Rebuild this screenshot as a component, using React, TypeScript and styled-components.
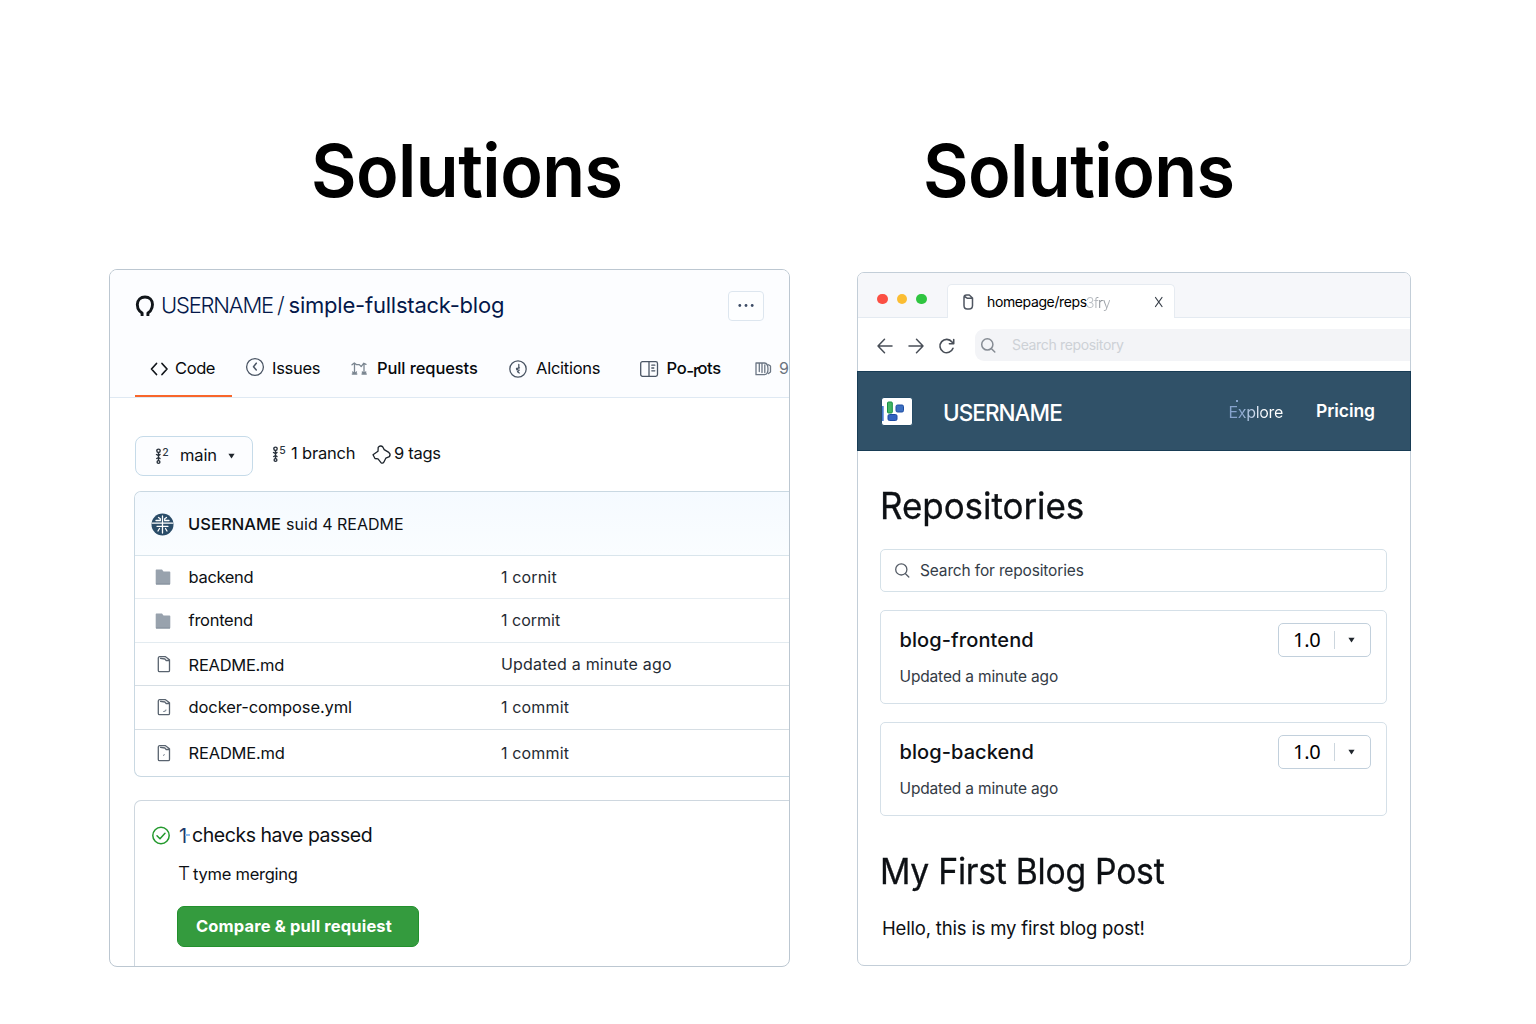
import React from "react";
import styled, { createGlobalStyle } from "styled-components";

const GlobalStyle = createGlobalStyle`
  *, *::before, *::after { box-sizing: border-box; }
  body {
    margin: 0;
    background: #fff;
    color: #0d1014;
    font-family: Inter, "Liberation Sans", sans-serif;
  }
  svg { display: block; flex: none; overflow: visible; }
`;

/* ---------- page ---------- */

const Page = styled.main`
  width: 1536px;
  height: 1024px;
  padding-left: 109px;
  display: flex;
  gap: 67px;
  overflow: hidden;
`;

const Column = styled.section<{ $width: number }>`
  width: ${(p) => p.$width}px;
  flex: none;
  display: flex;
  flex-direction: column;
`;

const ColumnTitle = styled.h1<{ $indent: number; $height: number }>`
  margin: 0 0 0 ${(p) => p.$indent}px;
  height: ${(p) => p.$height}px;
  padding-top: 121px;
  font-size: 73px;
  font-weight: 600;
  line-height: 100px;
  letter-spacing: -0.6px;
  color: #000;
  white-space: nowrap;
  transform: scaleX(0.96);
  transform-origin: left;
`;

const Text = styled.span<{ $size?: number; $weight?: number; $track?: number; $color?: string }>`
  font-size: ${(p) => p.$size ?? 16.5}px;
  font-weight: ${(p) => p.$weight ?? 400};
  letter-spacing: ${(p) => p.$track ?? 0}px;
  color: ${(p) => p.$color ?? "inherit"};
  line-height: 1.3;
  white-space: nowrap;
`;

/* ---------- repository panel ---------- */

const RepoPanel = styled.article`
  height: 698px;
  border: 1px solid #bcc7d1;
  border-radius: 8px;
  overflow: hidden;
  background: #fff;
`;

const RepoHeader = styled.header`
  height: 128px;
  background: #fcfdff;
  border-bottom: 1px solid #dfe9f3;
`;

const RepoTitleBar = styled.div`
  height: 72px;
  padding: 0 25px;
  display: flex;
  align-items: center;
`;

const RepoName = styled.h2`
  margin: 0 auto 1px 6px;
  display: flex;
  align-items: center;
  gap: 4px;
  color: #04184a;
`;

const MoreButton = styled.button`
  width: 36px;
  height: 30px;
  padding: 0;
  display: grid;
  place-items: center;
  background: #fdfeff;
  border: 1px solid #dde6ef;
  border-radius: 4px;
`;

const TabBar = styled.nav`
  height: 56px;
  padding-left: 25px;
  display: flex;
`;

const Tab = styled.a<{ $width: number; $lead?: number; $gap: number; $active?: boolean }>`
  width: ${(p) => p.$width}px;
  height: 55px;
  flex: none;
  padding: 0 0 0 ${(p) => p.$lead ?? 0}px;
  display: flex;
  align-items: center;
  gap: ${(p) => p.$gap}px;
  color: #07090c;
  border-bottom: 2px solid ${(p) => (p.$active ? "#f8662b" : "transparent")};
`;

const RaisedIcon = styled.span`
  margin-bottom: 3px;
`;

const TabWord = styled.span`
  display: flex;
  align-items: center;
`;

const DroppedStroke = styled.span`
  margin: 5px -1px 0 0;
  font-size: 17px;
  font-weight: 500;
  line-height: 20px;
  letter-spacing: -1.2px;
`;

const RepoBody = styled.div`
  padding-left: 24px;
`;

const BranchBar = styled.div`
  height: 93px;
  padding: 38px 0 0 1px;
  display: flex;
  align-items: flex-start;
`;

const BranchButton = styled.button`
  width: 118px;
  height: 40px;
  margin-right: 19px;
  padding: 0 17px 0 19px;
  display: flex;
  align-items: center;
  justify-content: space-between;
  font-family: inherit;
  color: inherit;
  background: #fcfdff;
  border: 1px solid #c6dbe9;
  border-radius: 8px;
`;

const BranchStat = styled.div<{ $width: number; $gap: number }>`
  width: ${(p) => p.$width}px;
  height: 36px;
  display: flex;
  align-items: center;
  gap: ${(p) => p.$gap}px;
`;

const FileTable = styled.div`
  height: 286px;
  border: 1px solid #c9d8e2;
  border-right: 0;
  border-radius: 7px 0 0 7px;
  overflow: hidden;
`;

const CommitRow = styled.div`
  height: 63px;
  padding: 2px 0 0 16px;
  display: flex;
  align-items: center;
  background: linear-gradient(#f5faff, #fafdff);
`;

const Author = styled.span`
  display: flex;
  align-items: center;
  gap: 5px;
  margin-left: 14px;
`;

const FileRow = styled.div<{ $height: number; $line: string; $nudge: number }>`
  height: ${(p) => p.$height}px;
  padding-left: 20px;
  display: grid;
  grid-template-columns: 33.600px 312.400px 1fr;
  align-items: center;
  border-top: 1px solid ${(p) => p.$line};

  & > span:nth-child(2) { padding-top: ${(p) => p.$nudge}px; }
`;

const ChecksCard = styled.div`
  height: 180px;
  margin-top: 23px;
  padding: 22px 0 0 17px;
  border: 1px solid #ced7df;
  border-width: 1px 0 0 1px;
  border-radius: 7px 0 0 0;
`;

const CheckLine = styled.div<{ $height: number; $indent?: number; $drop?: number }>`
  height: ${(p) => p.$height}px;
  padding: ${(p) => p.$drop ?? 0}px 0 0 ${(p) => p.$indent ?? 0}px;
  display: flex;
  align-items: center;
`;

const CheckCount = styled.span`
  width: 13px;
  margin-left: 9px;
  display: flex;
  align-items: center;
  font-size: 20px;
  line-height: 26px;
  color: #1f3a6b;

  &::after {
    content: "";
    width: 5px;
    height: 1.500px;
    margin: 0 0 2px -2px;
    background: #8fbdf0;
  }
`;

const CompareButton = styled.button`
  width: 242px;
  height: 41px;
  margin: 11px 0 0 25px;
  padding: 0 0 0 18px;
  display: flex;
  align-items: center;
  font-family: inherit;
  color: #fff;
  background: #349b3e;
  border: 1px solid #22902d;
  border-radius: 7px;
`;

/* ---------- browser panel ---------- */

const Browser = styled.article`
  height: 694px;
  border: 1px solid #c3ced8;
  border-radius: 7px;
  background: #fff;
`;

const TabStrip = styled.div`
  height: 45px;
  padding-left: 19px;
  display: flex;
  align-items: flex-end;
  background: #f6f7fa;
  border-bottom: 1px solid #e4eaf1;
  border-radius: 6px 6px 0 0;
`;

const WindowDots = styled.div`
  width: 70px;
  height: 36px;
  display: flex;
  gap: 9px;
`;

const Dot = styled.i<{ $color: string }>`
  width: 10.500px;
  height: 10.500px;
  margin-top: 12.500px;
  border-radius: 50%;
  background: ${(p) => p.$color};
`;

const PageTab = styled.div`
  width: 228px;
  height: 34px;
  margin-bottom: -1px;
  padding: 1px 10px 0 15px;
  display: flex;
  align-items: center;
  background: #fff;
  border: 1px solid #e6ebf1;
  border-bottom: 0;
  border-radius: 5px 5px 0 0;
`;

const PageTabTitle = styled.span`
  margin: 0 auto 0 13px;
  display: flex;
`;

const FadedTail = styled.span`
  margin-left: -1px;
  font-size: 14.5px;
  line-height: 19px;
  font-weight: 300;
  letter-spacing: -0.7px;
  background: linear-gradient(90deg, #b9bec3 35%, #7f858c 60%, #b4b8bd);
  background-clip: text;
  color: transparent;
`;

const Toolbar = styled.div`
  height: 53px;
  padding: 2px 0 0 19px;
  display: flex;
  align-items: center;
  gap: 15px;
`;

const AddressBar = styled.div`
  height: 32px;
  flex: 1;
  margin: 0 0 1px 5px;
  padding: 1px 0 0 6px;
  display: flex;
  align-items: center;
  gap: 16px;
  background: #f3f4f7;
  border-radius: 9px 0 0 9px;
`;

const SiteNav = styled.header`
  height: 80px;
  margin: 0 -1px;
  padding: 1px 35px 0 23px;
  display: flex;
  align-items: center;
  color: #fff;
  background: #305168;
  border: 1px solid #183c55;
`;

const SiteName = styled.strong`
  margin: 3px auto 0 30px;
  font-size: 22.5px;
  font-weight: 500;
  letter-spacing: -0.95px;
  line-height: 30px;
`;

const ExploreLink = styled.a`
  margin: 0 33px 0 0;
  font-size: 16px;
  line-height: 22px;
  letter-spacing: -0.34px;
  background: linear-gradient(90deg, #86a3cd 20%, #b5c8e2 40%, #fff 65%);
  background-clip: text;
  color: transparent;
  position: relative;

  &::before {
    content: "";
    position: absolute;
    left: 7px;
    top: -1px;
    width: 2px;
    height: 2px;
    background: #86a3cd;
  }
`;

const SiteBody = styled.div`
  padding: 0 23px 0 22px;
`;

const Heading = styled.h2<{ $size: number; $track: number; $scale: number; $height: number; $shift: number }>`
  margin: 0;
  height: ${(p) => p.$height}px;
  padding-top: ${(p) => p.$shift}px;
  font-size: ${(p) => p.$size}px;
  font-weight: 400;
  letter-spacing: ${(p) => p.$track}px;
  line-height: 44px;
  white-space: nowrap;
  -webkit-text-stroke: 0.3px #0d1014;
  transform: scaleX(${(p) => p.$scale});
  transform-origin: left;
`;

const SearchBox = styled.div`
  height: 43px;
  margin-bottom: 18px;
  padding-left: 14px;
  display: flex;
  align-items: center;
  gap: 10px;
  color: #343c47;
  border: 1px solid #d5e1e8;
  border-radius: 5px;

  & > span { padding-top: 1px; }
`;

const RepoCard = styled.div<{ $after: number }>`
  height: 94px;
  margin-bottom: ${(p) => p.$after}px;
  padding: 12px 15px 0 18.500px;
  display: flex;
  justify-content: space-between;
  border: 1px solid #d5e0e8;
  border-radius: 5px;
`;

const RepoInfo = styled.div`
  display: flex;
  flex-direction: column;
  padding-top: 4px;
  gap: 14px;
`;

const VersionSelect = styled.div`
  width: 93px;
  height: 34px;
  display: grid;
  grid-template-columns: 56px 33px;
  align-items: center;
  border: 1px solid #c2d0dc;
  border-radius: 5px;
`;

const Version = styled.span`
  height: 18px;
  padding-left: 14px;
  border-right: 1px solid #ccd6de;
  font-family: "Noto Sans", sans-serif;
  font-size: 20px;
  line-height: 18px;
  letter-spacing: -0.3px;
  color: #000;
`;

const VersionArrow = styled.span`
  display: grid;
  place-items: center;
`;

const Paragraph = styled.p`
  margin: 0;
  padding-left: 2px;
  font-size: 18.5px;
  line-height: 25px;
  letter-spacing: -0.18px;
  white-space: nowrap;
`;

/* ---------- icons ---------- */

const line = { fill: "none", strokeLinecap: "round", strokeLinejoin: "round" } as const;

const RepoMark = () => (
  <svg width="20" height="23" viewBox="0 0 20 23" {...line} stroke="#11151a" strokeWidth="2.9">
    <path d="M7.100 21V18.200L4.600 16C2.800 14 2.300 12 2.300 9.600 2.500 5 5.700 2 10 2s7.500 3 7.500 7.600c0 2.400-.6 4.400-2.100 6.400l-2.500 2.200V21" strokeLinecap="butt" />
  </svg>
);
const DotsIcon = () => (
  <svg width="18" height="4" fill="#3d4c66">
    <circle cx="2.800" cy="1.500" r="1.400" /><circle cx="9" cy="1.500" r="1.400" /><circle cx="15.200" cy="1.500" r="1.400" />
  </svg>
);
const CodeIcon = () => (
  <svg width="18" height="14" {...line} stroke="#11151a" strokeWidth="1.700">
    <path d="M6.500 1.500 1.500 7l5 5.500M12 1.500 17 7l-5 5.500" />
  </svg>
);
const IssueIcon = () => (
  <svg width="18" height="18" {...line} stroke="#4b5665" strokeWidth="1.300">
    <circle cx="9" cy="9" r="8.400" /><path d="M10.300 5.200 7.500 8.700l2.800 3.300" strokeWidth="1.500" />
  </svg>
);
const PullIcon = () => (
  <svg width="16" height="15" {...line} stroke="#7b8691" strokeWidth="1.300">
    <path d="M3.500 3v10M13 12.500V3M1.300 13h4.500M11 13h4.300M1 3.800 3.300 2l2 1.600h3l1.900 2 2.600-3.400L15 3.400M1.700 11l1.800 2 2-2M11.300 11l1.700 2 1.800-2" />
  </svg>
);
const ActionIcon = () => (
  <svg width="18" height="18" {...line} stroke="#4b5665" strokeWidth="1.300">
    <circle cx="9" cy="9" r="8.200" /><path d="M9.800 4.500v3M7.500 8.300l3-.5M9.800 7.500 7.600 9.700l2.600.4-1.700 1.700 1.800 1.200" strokeWidth="1.300" />
  </svg>
);
const ProjectIcon = () => (
  <svg width="18" height="16" {...line} stroke="#4b5665" strokeWidth="1.300">
    <rect x=".7" y=".7" width="16.800" height="14.600" rx="1.800" /><path d="M9 1v14M11.800 4.200h3M11.800 7h2M11.800 9.800h3" />
  </svg>
);
const BookStackIcon = () => (
  <svg width="17" height="14" {...line} stroke="#6b7684" strokeWidth="1.300">
    <path d="M1 1h8.500c3 .3 3.500 2.500 3.500 6s-1 5.500-3.500 5.700H1zM4.300 1v8.500M7 1v9.500M9.800 3v7.500M13.500 2.800l2 1.200v6l-2 1.500" />
  </svg>
);
const BranchIcon = ({ mark }: { mark: string }) => (
  <svg width="14" height="17" {...line} stroke="#27303b" strokeWidth="1.400">
    <circle cx="3.500" cy="2.800" r="1.700" /><circle cx="3.500" cy="14" r="1.400" />
    <path d="M3.500 4.800v7.500M1.500 6.500l2 1.200 1.500-1.200M1.700 10.500l1.800-1 1.500 1" />
    <text x="7.200" y="8" fontSize="10.500" fontWeight="500" fill="#2d3743" stroke="none">{mark}</text>
  </svg>
);
const TagIcon = () => (
  <svg width="19" height="19" {...line} stroke="#1d242c" strokeWidth="1.300">
    <path d="M6.200 2.400C7.500.6 9.600.6 10.800 2l1.400 2.600 4.600 2.800c1.600 1.200 1.700 2.500.6 4.300l-3.600 1.500-2 4c-.8 1.300-1.900 1.200-3 .2L6 13.800l-3-.3L1 9.800l5-3.600z" />
  </svg>
);
const Caret = ({ size = 7 }: { size?: number }) => (
  <svg width={size} height="6" viewBox="0 0 7 6"><path d="M.4.800h6.200L3.500 5.500z" fill="#20262d" /></svg>
);
const Avatar = () => (
  <svg width="23" height="23" {...line} stroke="#fff" strokeWidth="1.300">
    <circle cx="11.500" cy="11.500" r="11" fill="#2a4c68" stroke="none" />
    <path d="M11.500 3v17M1.500 10.200h20M6 13.300h11M7.500 4.500l1.800 1.200v2M15.500 4.500l-1.800 1.200v2M5 7.500h4.300M13.700 7.500H18M7 18l1.500-2.500M16 18l-1.500-2.500" />
  </svg>
);
const FolderIcon = () => (
  <svg width="16" height="16"><path d="M.7 1.500c0-.7.3-1 1-1H7l1.500 2H14.500c.5 0 .8.300.8.800V14.500c0 .6-.3 1-.9 1H1.700c-.6 0-1-.4-1-1z" fill="#98a2ad" /><path d="M1 15h14" stroke="#848f9b" /></svg>
);
const FileIcon = ({ mark }: { mark?: string }) => (
  <svg width="16" height="17" {...line} stroke="#59636f" strokeWidth="1.300">
    <path d="M3.300 2.200c0-1 .5-1.500 1.300-1.500H10.500l4 3v10.800c0 .8-.4 1.200-1.200 1.200H4.500c-.8 0-1.200-.4-1.200-1.200zM5.500 2.300l4.500.7 1 1.500h3" />
    {mark && <path d={mark} stroke="#8d96a1" strokeWidth="1.100" />}
  </svg>
);
const PassIcon = () => (
  <svg width="18" height="18" {...line} stroke="#23992d" strokeWidth="1.500">
    <circle cx="9" cy="8.500" r="8.200" /><path d="m5 8.800 3 3 5-5.500" />
  </svg>
);
const PageIcon = () => (
  <svg width="11" height="16" {...line} stroke="#4f5661" strokeWidth="1.500">
    <path d="M1 3.500C1 1.800 1.800 1 3.500 1h2.800L9.500 4v7.500c0 2.300-1 3.500-3.300 3.500h-2C2 15 1 13.800 1 11.500zM1.500 2.500l3 1.800h4.500" />
  </svg>
);
const CloseIcon = () => (
  <svg width="9" height="11" {...line} stroke="#353c46" strokeWidth="1.200"><path d="M.5.500l6.500 9M7 .5l-6.500 9" /></svg>
);
const ArrowIcon = ({ flip }: { flip?: boolean }) => (
  <svg width="16" height="16" {...line} stroke="#484e57" strokeWidth="1.500">
    <path d={flip ? "M1 8h14M8.500 1.200 15 8l-6.500 6.800" : "M15 8H1M7.500 1.200 1 8l6.500 6.800"} />
  </svg>
);
const ReloadIcon = () => (
  <svg width="16" height="16" {...line} stroke="#484e57" strokeWidth="1.600">
    <path d="M14 10.300A6.700 6.700 0 1 1 13 4l1.300 1.600M14.700 1.500v4.300h-4.300" />
  </svg>
);
const SearchIcon = ({ color, width = 1.3 }: { color: string; width?: number }) => (
  <svg width="15" height="15" {...line} stroke={color} strokeWidth={width}>
    <circle cx="6.300" cy="6.400" r="5.600" /><path d="m10.500 10.700 3.300 3.300" />
  </svg>
);
const SiteLogo = () => (
  <svg width="32" height="29">
    <rect x=".5" y=".5" width="31" height="28" rx="2.500" fill="#fff" stroke="#254b66" />
    <path d="M1 9h1.700v15H1z" fill="#4779cf" />
    <rect x="6.500" y="5" width="4.800" height="11" rx="1" fill="#44b565" stroke="#159044" />
    <rect x="15" y="8" width="7.500" height="7" rx="1.500" fill="#3c6fc0" stroke="#1c4da3" />
    <rect x="7" y="17.500" width="9" height="6" rx="1.500" fill="#3263c0" stroke="#1c4aa5" />
  </svg>
);

/* ---------- data ---------- */

const files = [
  { name: "backend", note: "1 cornit", icon: <FolderIcon />, height: 43, line: "#d9e5ec", track: -0.35, noteTrack: 0.15, nudge: 2 },
  { name: "frontend", note: "1 cormit", icon: <FolderIcon />, height: 44, line: "#e6edf2", track: -0.28, noteTrack: 0, nudge: 1 },
  { name: "README.md", note: "Updated a minute ago", icon: <FileIcon />, height: 43, line: "#e3ebf0", track: -0.28, noteTrack: 0.2, nudge: 3 },
  { name: "docker-compose.yml", note: "1 commit", icon: <FileIcon mark="M8.500 12.500h1l1.500-1.500" />, height: 44, line: "#d6dee4", track: -0.12, noteTrack: 0.15, nudge: 1 },
  { name: "README.md", note: "1 commit", icon: <FileIcon mark="m8.500 10.500.8-1" />, height: 48, line: "#d6dee4", track: -0.2, noteTrack: 0.15, nudge: 1 },
];

const repos = [
  { name: "blog-frontend", after: 18, track: 0.1 },
  { name: "blog-backend", after: 33, track: 0.08 },
];

export default function App() {
  return (
    <Page>
      <GlobalStyle />
      <Column $width={681}>
        <ColumnTitle $indent={202} $height={269}>Solutions</ColumnTitle>
        <RepoPanel>
          <RepoHeader>
            <RepoTitleBar>
              <RepoMark />
              <RepoName>
                <Text $size={22} $weight={300} $track={-1.21}>USERNAME</Text>
                <Text $size={22} $weight={300}>/</Text>
                <Text $size={22} $weight={400} $track={-0.22}>simple-fullstack-blog</Text>
              </RepoName>
              <MoreButton aria-label="More"><DotsIcon /></MoreButton>
            </RepoTitleBar>
            <TabBar>
              <Tab $width={97} $lead={15} $gap={7} $active><CodeIcon /><Text $track={-0.4}>Code</Text></Tab>
              <Tab $width={119} $lead={14} $gap={8}><RaisedIcon><IssueIcon /></RaisedIcon><Text $track={-0.3}>Issues</Text></Tab>
              <Tab $width={158} $gap={10}><PullIcon /><Text $weight={500} $track={-0.1}>Pull requests</Text></Tab>
              <Tab $width={131} $gap={9}><ActionIcon /><Text $track={-0.25}>Alcitions</Text></Tab>
              <Tab $width={115} $gap={8.5}>
                <ProjectIcon />
                <TabWord>
                  <Text $weight={500} $track={-0.3}>Po</Text>
                  <DroppedStroke>-r</DroppedStroke>
                  <Text $weight={500} $track={-0.3}>ots</Text>
                </TabWord>
              </Tab>
              <Tab $width={60} $gap={7}><BookStackIcon /><Text $size={16} $color="#6b7480">9</Text></Tab>
            </TabBar>
          </RepoHeader>

          <RepoBody>
            <BranchBar>
              <BranchButton>
                <BranchIcon mark="2" /><Text $track={-0.1}>main</Text><Caret />
              </BranchButton>
              <BranchStat $width={100} $gap={5}><BranchIcon mark="5" /><Text $track={-0.18}>1 branch</Text></BranchStat>
              <BranchStat $width={90} $gap={3}><TagIcon /><Text $track={-0.3}>9 tags</Text></BranchStat>
            </BranchBar>

            <FileTable>
              <CommitRow>
                <Avatar />
                <Author>
                  <Text $weight={500} $size={16.5} $track={0.05}>USERNAME</Text>
                  <Text $size={16}>suid 4 README</Text>
                </Author>
              </CommitRow>
              {files.map((f, i) => (
                <FileRow key={i} $height={f.height} $line={f.line} $nudge={f.nudge}>
                  {f.icon}
                  <Text $track={f.track}>{f.name}</Text>
                  <Text $size={16} $track={f.noteTrack} $color="#252b33">{f.note}</Text>
                </FileRow>
              ))}
            </FileTable>

            <ChecksCard>
              <CheckLine $height={26}>
                <PassIcon />
                <CheckCount>1</CheckCount>
                <Text $size={19.5} $track={-0.45}>checks have passed</Text>
              </CheckLine>
              <CheckLine $height={46} $indent={26} $drop={5}>
                <Text $size={19} $weight={300} $track={-1.5}>T</Text>
                <Text $track={-0.25}>&nbsp;</Text>
                <Text $track={-0.25}>tyme merging</Text>
              </CheckLine>
              <CompareButton><Text $size={16.5} $weight={700} $track={0.15}>Compare &amp; pull requiest</Text></CompareButton>
            </ChecksCard>
          </RepoBody>
        </RepoPanel>
      </Column>

      <Column $width={554}>
        <ColumnTitle $indent={65.5} $height={272}>Solutions</ColumnTitle>
        <Browser>
          <TabStrip>
            <WindowDots>
              <Dot $color="#fb4f43" /><Dot $color="#fbbd32" /><Dot $color="#2fc540" />
            </WindowDots>
            <PageTab>
              <PageIcon />
              <PageTabTitle>
                <Text $size={14} $track={-0.38} $color="#000">homepage/reps</Text>
                <FadedTail>3fry</FadedTail>
              </PageTabTitle>
              <CloseIcon />
            </PageTab>
          </TabStrip>
          <Toolbar>
            <ArrowIcon /><ArrowIcon flip /><ReloadIcon />
            <AddressBar>
              <SearchIcon color="#868c94" width={1.5} />
              <Text $size={14} $track={-0.35} $color="#cdd1d6">Search repository</Text>
            </AddressBar>
          </Toolbar>
          <SiteNav>
            <SiteLogo />
            <SiteName>USERNAME</SiteName>
            <ExploreLink>Explore</ExploreLink>
            <Text $size={17.5} $weight={600} $track={-0.05}>Pricing</Text>
          </SiteNav>
          <SiteBody>
            <Heading $size={36.5} $track={-0.08} $scale={0.96} $height={98} $shift={33}>Repositories</Heading>
            <SearchBox>
              <SearchIcon color="#555c66" />
              <Text $size={15.5} $track={-0.15}>Search for repositories</Text>
            </SearchBox>
            {repos.map((r) => (
              <RepoCard key={r.name} $after={r.after}>
                <RepoInfo>
                  <Text $size={20} $weight={500} $track={r.track}>{r.name}</Text>
                  <Text $size={15.5} $track={-0.15} $color="#343b45">Updated a minute ago</Text>
                </RepoInfo>
                <VersionSelect>
                  <Version>1.0</Version>
                  <VersionArrow><Caret /></VersionArrow>
                </VersionSelect>
              </RepoCard>
            ))}
            <Heading $size={35.5} $track={-0.28} $scale={0.95} $height={67} $shift={1}>My First Blog Post</Heading>
            <Paragraph>Hello, this is my first blog post!</Paragraph>
          </SiteBody>
        </Browser>
      </Column>
    </Page>
  );
}
